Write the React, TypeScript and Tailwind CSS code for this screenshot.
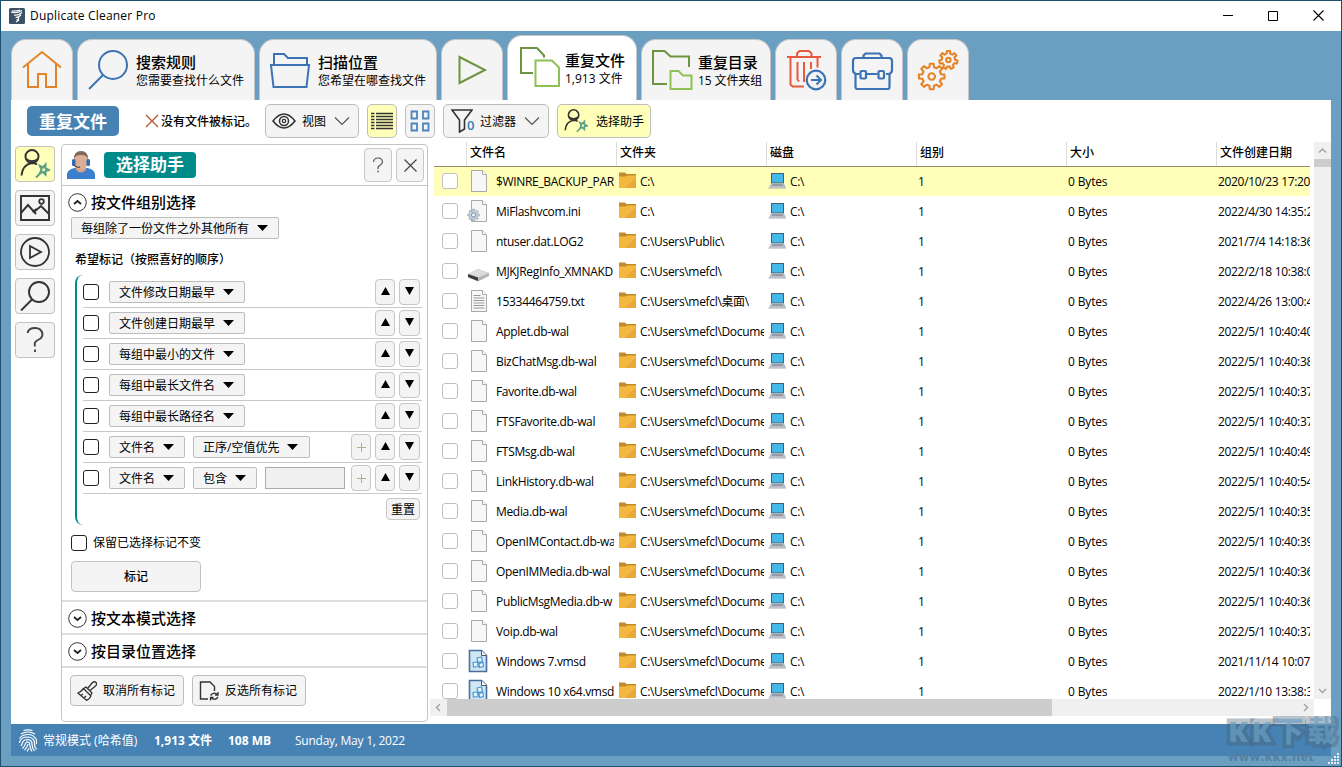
import type { ReactNode } from "react";

type IconProps = { box: string; w: number; h: number; children: ReactNode; className?: string };

function Icon({ box, w, h, children, className }: IconProps) {
  return (
    <svg viewBox={box} width={w} height={h} fill="none" className={`shrink-0 ${className ?? ""}`}>
      {children}
    </svg>
  );
}

function gearPath(cx: number, cy: number, outer: number, inner: number, teeth: number) {
  const pts: string[] = [];
  for (let i = 0; i < teeth; i++) {
    const a = (i / teeth) * Math.PI * 2 - Math.PI / 2;
    const s = Math.PI / teeth;
    [
      [inner, -s * 0.6],
      [outer, -s * 0.38],
      [outer, s * 0.38],
      [inner, s * 0.6],
    ].forEach(([r, d]) => {
      pts.push(`${(cx + r * Math.cos(a + d)).toFixed(2)} ${(cy + r * Math.sin(a + d)).toFixed(2)}`);
    });
  }
  return `M${pts.join("L")}Z`;
}

function WizardIcon({ size }: { size: number }) {
  return (
    <Icon box="0 0 30 30" w={size} h={size}>
      <circle cx="12" cy="7.5" r="6.5" stroke="#333" strokeWidth="2" />
      <path d="M6 10q6 4.5 12 0M1.5 26.5q1-11 10.500-12.500q3 0 5 1.500" stroke="#333" strokeWidth="2" />
      <path
        d="M16 28.500l6-6M20 17l3 1.500 2.500-3v4l3.500 1.500-3.500 1v3.500l-2.500-2.500-3 1 1.500-3.500z"
        stroke="#5a9f88"
        strokeWidth="2"
      />
    </Icon>
  );
}

type TabProps = { width: string; title?: string; sub?: string; active?: boolean; textClass?: string; children: ReactNode };

function Tab({ width, title, sub, active, textClass, children }: TabProps) {
  return (
    <div
      className={`flex rounded-t-[15px] border border-b-0 border-[#c6c6c6] ${width} ${
        active ? "h-[65px] bg-white pt-[3px]" : "h-[61px] bg-[#f4f4f4]"
      }`}
    >
      {children}
      {title && (
        <div className={`whitespace-nowrap ${active ? "pt-3" : "pt-[13px]"} ${textClass ?? ""}`}>
          <div className="text-[15px] font-medium leading-[19px]">{title}</div>
          <div className="text-[12px] leading-[17px]">{sub}</div>
        </div>
      )}
    </div>
  );
}

function Tabs() {
  return (
    <nav className="flex h-[69px] items-end gap-1 pl-[10px]">
      <Tab width="w-[62px]">
        <Icon box="12 40 60 60" w={60} h={60}>
          <path d="M23 67.500L42 52l19 15.500M28 64v23h10V74h8v13h10V64" stroke="#e58427" strokeWidth="2" />
        </Icon>
      </Tab>
      <Tab width="w-[178px]" title="搜索规则" sub="您需要查找什么文件">
        <Icon box="78 40 58 60" w={58} h={60}>
          <circle cx="113" cy="65" r="14" stroke="#3b73b5" strokeWidth="2" />
          <path d="M103 75L89 89" stroke="#3b73b5" strokeWidth="2" />
        </Icon>
      </Tab>
      <Tab width="w-[178px]" title="扫描位置" sub="您希望在哪查找文件">
        <Icon box="260 40 58 60" w={58} h={60}>
          <path d="M274 64V54h10l4 4h19v6M271 65h38l-2.500 22h-33z" stroke="#3b73b5" strokeWidth="2" />
        </Icon>
      </Tab>
      <Tab width="w-[62px]">
        <Icon box="442 40 60 60" w={60} h={60}>
          <path d="M459.500 57v26L485 70z" stroke="#6d9440" strokeWidth="2" />
        </Icon>
      </Tab>
      <Tab width="w-[130px]" title="重复文件" sub="1,913 文件" active>
        <Icon box="508 40 57 60" w={57} h={60}>
          <path d="M533 74H521V49h16l7 7.500v2" stroke="#6d9440" strokeWidth="2" />
          <path d="M535.500 61.500H552l7 7v18.500h-23.500z" stroke="#8dc153" strokeWidth="2" />
        </Icon>
      </Tab>
      <Tab width="w-[130px]" title="重复目录" sub="15 文件夹组" textClass="-ml-px tracking-[-0.1px]">
        <Icon box="642 40 57 60" w={57} h={60}>
          <path d="M667 84h-14V51h11.500l6 5.500H689V67" stroke="#6d9440" strokeWidth="2" />
          <path d="M670.500 71h8l4.500 4.500h8.500V89h-21z" stroke="#8dc153" strokeWidth="2" />
        </Icon>
      </Tab>
      <Tab width="w-[62px]">
        <Icon box="776 40 60 60" w={60} h={60}>
          <path
            d="M787 57h34M797 57v-3.500l2.500-2.500h9.500l2.500 2.500V57M790.500 58v26.500l2 2H804M817.500 58v9.500M797.500 62v17.500l1.500 2M804 62v20M811 62v7"
            stroke="#e8593d"
            strokeWidth="2"
          />
          <circle cx="816" cy="80" r="9.300" stroke="#3b73b5" strokeWidth="2.200" />
          <path d="M811 80h10M816.500 75.500l4.500 4.500-4.500 4.500" stroke="#3b73b5" strokeWidth="2" />
        </Icon>
      </Tab>
      <Tab width="w-[62px]">
        <Icon box="842 40 60 60" w={60} h={60}>
          <g stroke="#3b73b5" strokeWidth="2.200">
            <path d="M863.500 58v-2.500l2-2h14l2 2V58M859.500 74h-3.500q-3-1-3-4v-9q0-3 3-3h33q3 0 3 3v9q0 3-3 4h-3M855.500 74v13q0 2 2 2h30q2 0 2-2V74M867 74h10.500" />
            <rect x="860.500" y="71" width="5.500" height="7.500" rx="1" />
            <rect x="878.500" y="71" width="5.500" height="7.500" rx="1" />
          </g>
        </Icon>
      </Tab>
      <Tab width="w-[62px]">
        <Icon box="908 40 60 60" w={60} h={60}>
          <g stroke="#e58427" strokeWidth="2.100" strokeLinejoin="round">
            <path d={gearPath(931.7, 76.5, 12.9, 9.6, 8)} />
            <circle cx="931.700" cy="76.500" r="3.300" />
            <path d={gearPath(948.4, 60, 9.2, 6.7, 7)} />
            <circle cx="948.400" cy="60" r="2.200" />
          </g>
        </Icon>
      </Tab>
    </nav>
  );
}

const toolBtn = "flex h-[34px] items-center rounded-[5px] border border-[#bdbdbd]";

function Toolbar() {
  return (
    <div className="flex h-[42px] items-center text-[12px] leading-[18px]">
      <div className="ml-4 flex h-[30px] w-[92px] items-center justify-center rounded-[5px] bg-[#4682b4] pt-px text-[17px] font-bold text-white">
        重复文件
      </div>
      <Icon box="0 0 14 14" w={14} h={14} className="ml-[26px]">
        <path d="M1 1l12 12M13 1L1 13" stroke="#b5562e" strokeWidth="1.300" />
      </Icon>
      <span className="ml-[2px] w-[104px] whitespace-nowrap pt-[2px] font-medium">没有文件被标记。</span>
      <div className={`${toolBtn} w-[94px] bg-[#f4f4f4] pl-[6px]`}>
        <Icon box="0 0 24 16" w={24} h={16}>
          <path d="M1 8q11-14 22 0-11 14-22 0z" stroke="#333" strokeWidth="1.600" />
          <circle cx="12" cy="8" r="4.500" stroke="#333" strokeWidth="1.500" />
          <circle cx="12" cy="8" r="1.700" stroke="#333" strokeWidth="1.200" />
        </Icon>
        <span className="ml-[6px] pt-[2px]">视图</span>
        <Icon box="0 0 16 10" w={16} h={10} className="ml-2">
          <path d="M1 1.500l7 7 7-7" stroke="#555" strokeWidth="1.200" />
        </Icon>
      </div>
      <div className={`${toolBtn} ml-2 w-[30px] justify-center bg-[#ffffb9]`}>
        <Icon box="0 0 22 19" w={22} h={19}>
          <path
            d="M0 1.500h3.500M5 1.500h17M0 4.500h3.500M5 4.500h17M0 7.500h3.500M5 7.500h17M0 10.500h3.500M5 10.500h17M0 13.500h3.500M5 13.500h17M0 16.500h3.500M5 16.500h17"
            stroke="#333"
            strokeWidth="1.300"
          />
        </Icon>
      </div>
      <div className={`${toolBtn} ml-2 w-[30px] justify-center bg-[#f4f4f4]`}>
        <Icon box="0 0 20 22" w={20} h={22}>
          <path d="M1.500 1.500H7v7H1.500zM13 1.500h5.500v7H13zM1.500 13.500H7v7H1.500zM13 13.500h5.500v7H13z" stroke="#4a86bd" strokeWidth="1.800" />
        </Icon>
      </div>
      <div className={`${toolBtn} ml-2 w-[106px] bg-[#f4f4f4] pl-[7px]`}>
        <span className="relative flex w-[29px]">
          <Icon box="0 0 22 24" w={22} h={24}>
            <path d="M1 1h20L13.500 11v9L8.500 23V11z" stroke="#333" strokeWidth="1.600" />
          </Icon>
          <span className="absolute left-[16px] top-[8px] text-[13px] font-semibold leading-4 text-[#2d80b5]">0</span>
        </span>
        <span className="pt-[2px]">过滤器</span>
        <Icon box="0 0 16 10" w={16} h={10} className="ml-2">
          <path d="M1 1.500l7 7 7-7" stroke="#555" strokeWidth="1.200" />
        </Icon>
      </div>
      <div className={`${toolBtn} ml-2 w-[94px] bg-[#ffffb9] pl-[6px]`}>
        <WizardIcon size={24} />
        <span className="ml-2 pt-[2px]">选择助手</span>
      </div>
    </div>
  );
}

function Rail() {
  const btn = "flex h-9 w-10 items-center justify-center rounded-[4px] border border-[#c2c2c2]";
  return (
    <div className="ml-1 mt-1 flex w-[46px] shrink-0 flex-col gap-2">
      <div className={`${btn} bg-[#ffffb9]`}>
        <WizardIcon size={30} />
      </div>
      <div className={`${btn} bg-[#f4f4f4]`}>
        <Icon box="0 0 30 26" w={30} h={26}>
          <path d="M1 1h28v24H1zM1 18l7-8 8 9M12.500 17l4-3M14 17l7-6 8 8" stroke="#333" strokeWidth="1.900" />
          <circle cx="21.500" cy="6.500" r="2.300" stroke="#333" strokeWidth="1.700" />
        </Icon>
      </div>
      <div className={`${btn} bg-[#f4f4f4]`}>
        <Icon box="0 0 30 30" w={30} h={30}>
          <circle cx="15" cy="15" r="14" stroke="#333" strokeWidth="1.800" />
          <path d="M10 9v12l11-6z" stroke="#333" strokeWidth="1.800" />
        </Icon>
      </div>
      <div className={`${btn} bg-[#f4f4f4]`}>
        <Icon box="0 0 30 30" w={30} h={30}>
          <circle cx="19" cy="11" r="10" stroke="#333" strokeWidth="1.900" />
          <path d="M12 18.500L1 29.500" stroke="#333" strokeWidth="1.900" />
        </Icon>
      </div>
      <div className={`${btn} bg-[#f4f4f4]`}>
        <Icon box="0 0 30 30" w={30} h={30}>
          <path d="M7.500 8q1-5 7.500-5t7.500 6q0 4-4.500 6t-3 6.500M15 24.500V27" stroke="#444" strokeWidth="1.900" />
        </Icon>
      </div>
    </div>
  );
}

function Caret() {
  return (
    <svg width="11" height="6" viewBox="0 0 11 6" className="mb-px shrink-0">
      <path d="M0 0h11L5.500 6z" fill="#000" />
    </svg>
  );
}

function Combo({ label, width }: { label: string; width: string }) {
  return (
    <div
      className={`flex h-[22px] items-center gap-2 whitespace-nowrap rounded-[2px] border border-[#bdbdbd] bg-[#f4f4f4] pl-[9px] ${width}`}
    >
      <span className="pt-px">{label}</span>
      <Caret />
    </div>
  );
}

function Box({ dark }: { dark?: boolean }) {
  return (
    <span
      className={`h-4 w-4 shrink-0 rounded-[3px] border bg-white ${dark ? "border-[#222]" : "border-[#c0c0c0]"}`}
    />
  );
}

const sqBtn = "flex h-[26px] shrink-0 items-center justify-center rounded-[4px] border border-[#c6c6c6] bg-[#f4f4f4]";

function Criteria({ children, plus }: { children: ReactNode; plus?: boolean }) {
  return (
    <div className="flex h-[31px] items-center border-b border-[#c8c8c8]">
      <Box dark />
      <div className="ml-[10px] flex flex-1 gap-2">{children}</div>
      {plus && (
        <span className={`${sqBtn} mr-1 w-5`}>
          <svg width="9" height="9" viewBox="0 0 9 9">
            <path d="M4.500 0v9M0 4.500h9" stroke="#a8b490" />
          </svg>
        </span>
      )}
      <span className={`${sqBtn} mr-1 w-5 pb-[2px]`}>
        <svg width="9" height="8" viewBox="0 0 9 8">
          <path d="M4.500 0L9 8H0z" />
        </svg>
      </span>
      <span className={`${sqBtn} mr-[2px] w-[21px] pb-[3px]`}>
        <svg width="9" height="8" viewBox="0 0 9 8">
          <path d="M0 0h9L4.500 8z" />
        </svg>
      </span>
    </div>
  );
}

function SectionTitle({ title, open }: { title: string; open?: boolean }) {
  return (
    <div className="flex h-8 items-center gap-1 pl-[6px] text-[15px] font-medium">
      <Icon box="0 0 19 19" w={19} h={19}>
        <circle cx="9.500" cy="9.500" r="8.800" stroke="#333" />
        <path d={open ? "M6 11l3.500-3 3.500 3" : "M6 8l3.500 3L13 8"} stroke="#222" strokeWidth="1.800" />
      </Icon>
      <span>{title}</span>
    </div>
  );
}

const simpleRules = ["文件修改日期最早", "文件创建日期最早", "每组中最小的文件", "每组中最长文件名", "每组中最长路径名"];

function AssistantPanel() {
  return (
    <section className="mt-[2px] flex h-[578px] w-[367px] shrink-0 flex-col rounded-[4px] border border-[#c4c4c4] text-[12px] leading-[18px]">
      <header className="flex h-[41px] shrink-0 items-center border-b border-[#c4c4c4] pl-[5px] pr-[3px]">
        <Icon box="0 0 28 28" w={28} h={28}>
          <path d="M0 28v-5q1-5 8-6h12q7 1 8 6v5z" fill="#3b7fce" />
          <path d="M9 14h10v5q-5 5-10 0z" fill="#d3a085" />
          <path d="M7 7q0-6 7-6.500 7 .5 7 6.500v4q-1 7-7 8-6-1-7-8z" fill="#dcae96" />
          <path d="M7 8q0-8 7-8t7 8q-1-4-7-4T7 8z" fill="#856a5c" />
          <rect x="5" y="8" width="3.500" height="7" rx="1.500" fill="#2f6cb3" />
          <rect x="19.500" y="8" width="3.500" height="7" rx="1.500" fill="#2f6cb3" />
          <path d="M7 14q2 3 6 2" stroke="#3a3a4a" strokeWidth="1.200" />
        </Icon>
        <div className="ml-[9px] flex h-[26px] w-[92px] items-center justify-center rounded-[4px] bg-[#008b8b] text-[17px] font-bold text-white">
          选择助手
        </div>
        <span className="ml-auto flex h-[34px] w-7 items-center justify-center rounded-[4px] border border-[#c8c8c8] bg-[#f4f4f4]">
          <Icon box="0 0 12 16" w={12} h={16}>
            <path d="M1.500 5q.5-4 4.500-4t4.500 3.800q0 2.200-2.500 3.500T6 12M6 13.500V15.500" stroke="#555" strokeWidth="1.200" />
          </Icon>
        </span>
        <span className="ml-1 flex h-[34px] w-7 items-center justify-center rounded-[4px] border border-[#c8c8c8] bg-[#f4f4f4]">
          <Icon box="0 0 13 13" w={13} h={13}>
            <path d="M.5.5l12 12M12.500.5l-12 12" stroke="#444" strokeWidth="1.200" />
          </Icon>
        </span>
      </header>

      <div className="flex h-[416px] shrink-0 flex-col border-b-2 border-[#dedede]">
        <SectionTitle title="按文件组别选择" open />
        <div className="-mt-px pl-[9px]">
          <Combo label="每组除了一份文件之外其他所有" width="w-[208px]" />
        </div>
        <div className="mt-3 pl-[13px] font-medium">希望标记（按照喜好的顺序）</div>
        <div className="ml-[13px] mr-[5px] mt-[6px] flex h-[250px]">
          <span className="h-full w-2 shrink-0 rounded-l-[8px] border-l-2 border-[#008b8b]" />
          <div className="flex-1 pt-[2px]">
            {simpleRules.map((rule) => (
              <Criteria key={rule}>
                <Combo label={rule} width="w-[136px]" />
              </Criteria>
            ))}
            <Criteria plus>
              <Combo label="文件名" width="w-[76px]" />
              <Combo label="正序/空值优先" width="w-[117px]" />
            </Criteria>
            <Criteria plus>
              <Combo label="文件名" width="w-[76px]" />
              <Combo label="包含" width="w-16" />
              <span className="h-[22px] w-20 border border-[#ababab] bg-[#f0f0f0]" />
            </Criteria>
            <div className="mr-[2px] mt-1 flex justify-end">
              <span className="flex h-[22px] w-[34px] items-center justify-center rounded-[4px] border border-[#c6c6c6] bg-[#f4f4f4] pt-px">
                重置
              </span>
            </div>
          </div>
        </div>
        <div className="mt-2 flex items-center gap-[6px] pl-[9px]">
          <Box dark />
          <span className="pt-px">保留已选择标记不变</span>
        </div>
        <div className="ml-[9px] mt-[9px] flex h-[31px] w-[130px] items-center justify-center rounded-[4px] border border-[#c2c2c2] bg-[#f4f4f4] pt-px font-medium">
          标记
        </div>
      </div>
      <div className="h-[33px] shrink-0 border-b-2 border-[#dedede]">
        <SectionTitle title="按文本模式选择" />
      </div>
      <div className="h-[33px] shrink-0 border-b-2 border-[#dedede]">
        <SectionTitle title="按目录位置选择" />
      </div>
      <div className="flex gap-2 pl-2 pt-[7px]">
        <div className="flex h-[31px] w-[114px] items-center gap-[6px] rounded-[4px] border border-[#bdbdbd] bg-[#f4f4f4] pl-[6px]">
          <Icon box="0 0 20 20" w={20} h={20}>
            <path
              d="M11 7l4.500-5.500q2-1.500 3.500 0t-.5 3.500L13 9.500M9 6l6 6-1.500 2.500L6.500 7.500zM6.500 7.500Q4 11 .8 12l8.700 7.300q4-2 4.500-4.800M4 14.500l2-1.500M7 17l2-2"
              stroke="#333"
              strokeWidth="1.300"
              strokeLinejoin="round"
            />
          </Icon>
          <span className="whitespace-nowrap pt-px">取消所有标记</span>
        </div>
        <div className="flex h-[31px] w-[114px] items-center gap-[6px] rounded-[4px] border border-[#bdbdbd] bg-[#f4f4f4] pl-[6px]">
          <Icon box="0 0 20 20" w={20} h={20}>
            <path d="M9 18H1.500V1H11l4.500 4.500V10" stroke="#333" strokeWidth="1.400" />
            <path d="M11.500 14.500q3-4 7-1M19 11v3h-3M19 16q-3 4-7 1M11.500 19.500v-3h3" stroke="#333" strokeWidth="1.300" />
          </Icon>
          <span className="whitespace-nowrap pt-px">反选所有标记</span>
        </div>
      </div>
    </section>
  );
}

type FileKind = "blank" | "ini" | "drive" | "text" | "vm";
type Row = { name: string; dir: string; date: string; kind: FileKind };

const docs = "C:\\Users\\mefcl\\Docume";

const rows: Row[] = [
  { name: "$WINRE_BACKUP_PART", dir: "C:\\", date: "2020/10/23 17:20", kind: "blank" },
  { name: "MiFlashvcom.ini", dir: "C:\\", date: "2022/4/30 14:35:2", kind: "ini" },
  { name: "ntuser.dat.LOG2", dir: "C:\\Users\\Public\\", date: "2021/7/4 14:18:36", kind: "blank" },
  { name: "MJKJRegInfo_XMNAKD", dir: "C:\\Users\\mefcl\\", date: "2022/2/18 10:38:0", kind: "drive" },
  { name: "15334464759.txt", dir: "C:\\Users\\mefcl\\桌面\\", date: "2022/4/26 13:00:4", kind: "text" },
  { name: "Applet.db-wal", dir: docs, date: "2022/5/1 10:40:40", kind: "blank" },
  { name: "BizChatMsg.db-wal", dir: docs, date: "2022/5/1 10:40:38", kind: "blank" },
  { name: "Favorite.db-wal", dir: docs, date: "2022/5/1 10:40:37", kind: "blank" },
  { name: "FTSFavorite.db-wal", dir: docs, date: "2022/5/1 10:40:37", kind: "blank" },
  { name: "FTSMsg.db-wal", dir: docs, date: "2022/5/1 10:40:49", kind: "blank" },
  { name: "LinkHistory.db-wal", dir: docs, date: "2022/5/1 10:40:54", kind: "blank" },
  { name: "Media.db-wal", dir: docs, date: "2022/5/1 10:40:35", kind: "blank" },
  { name: "OpenIMContact.db-wa", dir: docs, date: "2022/5/1 10:40:39", kind: "blank" },
  { name: "OpenIMMedia.db-wal", dir: docs, date: "2022/5/1 10:40:36", kind: "blank" },
  { name: "PublicMsgMedia.db-w", dir: docs, date: "2022/5/1 10:40:36", kind: "blank" },
  { name: "Voip.db-wal", dir: docs, date: "2022/5/1 10:40:37", kind: "blank" },
  { name: "Windows 7.vmsd", dir: docs, date: "2021/11/14 10:07", kind: "vm" },
  { name: "Windows 10 x64.vmsd", dir: docs, date: "2022/1/10 13:38:3", kind: "vm" },
];

function FileIcon({ kind }: { kind: FileKind }) {
  if (kind === "drive") {
    return (
      <Icon box="0 0 24 24" w={24} h={24}>
        <path d="M1 15l10-5 11 4v3l-11 5.500-10-4z" fill="#b5b5b5" />
        <path d="M1 15l10-5 11 4-11 4.500z" fill="#dcdcdc" />
        <path d="M1 15l10 3.500V22L1 18z" fill="#3c3f3c" />
      </Icon>
    );
  }
  if (kind === "vm") {
    return (
      <Icon box="0 0 24 24" w={24} h={24}>
        <path d="M2.500 1.500h12l5 5v16h-17z" fill="#cfe6f5" stroke="#4a6f9f" strokeWidth="1.600" />
        <path d="M14.500 1.500v5h5" fill="#fff" stroke="#555" />
        <path d="M10 9l4.500-1 1 4.500-4.500 1zM6 13.500l4.500-.5.500 4.500-4.500.5zM12 14.500l4-1 .5 4-4 1z" fill="#e4f5ff" stroke="#4e9ad2" strokeWidth="1.200" />
      </Icon>
    );
  }
  return (
    <Icon box="0 0 24 24" w={24} h={24}>
      <path d="M4.500 1.500h11l4 4v17h-15z" fill="#f7f7f7" stroke="#a9a9a9" />
      <path d="M15.500 1.500v4h4" fill="#fff" stroke="#a9a9a9" />
      {kind === "text" && <path d="M6.500 6.500h7M6.500 9h11M6.500 11.500h11M6.500 14h11M6.500 16.500h11M6.500 19h11" stroke="#999" />}
      {kind === "ini" && (
        <>
          <path d={gearPath(6.5, 16, 6, 4.5, 8)} fill="#c3ccd5" stroke="#94a0ab" strokeWidth=".6" />
          <circle cx="6.500" cy="16" r="2" fill="#fff" stroke="#6d8fb0" />
        </>
      )}
    </Icon>
  );
}

function FolderIcon() {
  return (
    <Icon box="0 0 17 17" w={17} h={17} className="-mt-px">
      <path d="M0 .5h6L7.500 2H17v4H0z" fill="#c18a2c" />
      <path d="M0 4.500h6.500L8 3.500h9v12.500H0z" fill="#f4b73f" />
      <path d="M17 5v11H6z" fill="#e9a93a" />
    </Icon>
  );
}

function DiskIcon() {
  return (
    <Icon box="0 0 19 18" w={19} h={18}>
      <path d="M3 1h13v10.500H3z" fill="#48606e" />
      <path d="M4 2h11v8.500H4z" fill="#45b8ea" />
      <path d="M3 11.500h13l2 4H1z" fill="#b9bec6" />
      <path d="M4.500 12.300h10l.8 1.500H4z" fill="#8a909a" />
      <path d="M.5 15.500h17.500v1H.5z" fill="#a3a8b1" />
    </Icon>
  );
}

const columns = ["", "文件名", "文件夹", "磁盘", "组别", "大小", "文件创建日期"];
const gridCols = "grid grid-cols-[33px_150px_150px_150px_150px_150px_93px]";

function ResultsTable() {
  return (
    <section className="flex h-[574px] flex-1 flex-col">
      <div className="flex h-[557px]">
        <div className="ml-[6px] mr-1 w-[876px] overflow-hidden">
          <div className={`${gridCols} h-[25px] border-b border-[#8f8f6a]`}>
            {columns.map((c, i) => (
              <div
                key={i}
                className={`flex items-center whitespace-nowrap pb-[2px] pl-[3px] text-[12px] font-medium ${
                  i < 6 ? "border-r border-[#dcdcdc]" : ""
                }`}
              >
                {c}
              </div>
            ))}
          </div>
          {rows.map((r, i) => (
            <div
              key={r.name}
              className={`${gridCols} h-[30px] items-center border-b border-white pb-px text-[12px] tracking-[-0.33px] ${
                i === 0 ? "bg-[#ffffb9]" : ""
              }`}
            >
              <span className="flex pl-2">
                <Box />
              </span>
              <span className="mr-[3px] flex items-center gap-[5px] overflow-hidden whitespace-nowrap">
                <FileIcon kind={r.kind} />
                <span className="pt-[2px]">{r.name}</span>
              </span>
              <span className="mr-[3px] flex items-center gap-1 overflow-hidden whitespace-nowrap pl-[2px]">
                <FolderIcon />
                <span className="pt-[2px]">{r.dir}</span>
              </span>
              <span className="flex items-center gap-[3px] pl-px">
                <DiskIcon />
                <span className="pt-[2px]">C:\</span>
              </span>
              <span className="pl-px pt-[2px]">1</span>
              <span className="pl-px pt-[2px] tracking-[-0.15px]">0 Bytes</span>
              <span className="overflow-hidden whitespace-nowrap pl-px pt-[2px]">{r.date}</span>
            </div>
          ))}
        </div>
        <div className="flex w-[17px] flex-col items-center bg-[#f0f0f0]">
          <Icon box="0 0 17 17" w={17} h={17}>
            <path d="M5 10.500l3.500-3.500 3.500 3.500" stroke="#a0a0a0" strokeWidth="1.300" />
          </Icon>
          <span className="h-2 w-full bg-[#cdcdcd]" />
          <Icon box="0 0 17 17" w={17} h={17} className="mt-auto">
            <path d="M5 7l3.500 3.500L12 7" stroke="#a0a0a0" strokeWidth="1.300" />
          </Icon>
        </div>
      </div>
      <div className="ml-[2px] flex h-[17px] w-[884px] bg-[#f0f0f0]">
        <Icon box="0 0 17 17" w={17} h={17}>
          <path d="M10 5L6.500 8.500 10 12" stroke="#a0a0a0" strokeWidth="1.300" />
        </Icon>
        <span className="w-[605px] bg-[#cdcdcd]" />
        <Icon box="0 0 17 17" w={17} h={17} className="ml-auto">
          <path d="M7 5l3.500 3.500L7 12" stroke="#a0a0a0" strokeWidth="1.300" />
        </Icon>
      </div>
    </section>
  );
}

function StatusBar() {
  return (
    <footer className="mx-[10px] flex h-8 items-center bg-[#4682b4] pl-2 text-[12px] leading-[18px] text-white">
      <Icon box="0 0 18 23" w={18} h={23}>
        <g stroke="#fff" strokeWidth="1.200">
          <path d="M4.500 1.500Q9 .3 13.500 1.500M2 5q7-4 14 0M.5 9.500Q3 5.500 9 5.500t8.500 5.500v4" />
          <path d="M.5 14q.5-6 8.500-6 6.500.5 6.500 6.500 0 4 2 6" />
          <path d="M2 17q1.500-2 1.500-3.500 1-3 5.500-3 4 .5 4 4.500 0 4.500 2.500 7" />
          <path d="M3.500 19.500Q6 17 6.500 14.500q1-1.800 2.500-1.500 2 .5 1.800 3 .3 4 2.200 6.500M5.500 21q3-2.500 3.500-6M8 22.500l2-3" />
        </g>
      </Icon>
      <span className="ml-[6px] w-[111px] whitespace-nowrap pt-[2px]">常规模式 (哈希值)</span>
      <span className="w-[74px] pt-[2px] font-bold">1,913 文件</span>
      <span className="w-[67px] pt-[2px] font-bold">108 MB</span>
      <span className="pt-[2px] tracking-[-0.25px]">Sunday, May 1, 2022</span>
    </footer>
  );
}

function Watermark() {
  return (
    <div className="absolute bottom-0 right-0 w-[117px] overflow-hidden whitespace-nowrap pl-1">
      <div className="h-8 text-[29px] font-black leading-[30px] tracking-[3.500px] text-[#6b9fc1]/70 [-webkit-text-stroke:7px_rgba(75,95,115,0.4)] [paint-order:stroke]">
        KK下载
      </div>
      <div className="h-[18px] text-[12px] font-bold leading-[18px] tracking-[0.600px] text-[#557f9f]">www.kkx.net</div>
    </div>
  );
}

export default function App() {
  return (
    <div className="relative h-[767px] w-[1342px] overflow-hidden border border-[#1d4f6e] bg-[#6b9fc1] font-['Open_Sans','Noto_Sans_CJK_SC',sans-serif] text-black">
      <header className="flex h-[30px] items-center bg-white pl-2">
        <Icon box="0 0 16 16" w={16} h={16}>
          <rect width="16" height="16" rx="1.500" fill="#3b5265" />
          <path d="M2 4q5 2 11-1.500M3 3q4 .5 8-1M5 7q4 1 8-2.500M6.500 9.500q3 0 5.500-2.500M7.500 11.500q3 .5 2-2M7 14l3-2" stroke="#fff" strokeWidth="1.200" />
        </Icon>
        <span className="ml-[5px] text-[12px] leading-[18px] tracking-[0.200px]">Duplicate Cleaner Pro</span>
        <div className="ml-auto flex items-center gap-[35px] pr-[17px]">
          <svg width="10" height="10" viewBox="0 0 10 10">
            <path d="M0 4.500h10" stroke="#000" />
          </svg>
          <svg width="10" height="10" viewBox="0 0 10 10" fill="none" className="-mt-px">
            <path d="M.5.5h9v9h-9z" stroke="#000" />
          </svg>
          <svg width="11" height="11" viewBox="0 0 11 11" className="-mt-px">
            <path d="M.5.5l10 10M10.500.5l-10 10" stroke="#000" strokeWidth="1.100" />
          </svg>
        </div>
      </header>
      <Tabs />
      <main className="mx-[10px] h-[624px] bg-white">
        <Toolbar />
        <div className="flex">
          <Rail />
          <AssistantPanel />
          <ResultsTable />
        </div>
      </main>
      <StatusBar />
      <svg width="12" height="12" viewBox="0 0 12 12" className="absolute bottom-[1px] right-[1px]">
        <path d="M9 0h2v2H9zM9 3h2v2H9zM6 3h2v2H6zM9 6h2v2H9zM6 6h2v2H6zM3 6h2v2H3zM9 9h2v2H9zM6 9h2v2H6zM3 9h2v2H3zM0 9h2v2H0z" fill="#e6eef5" />
      </svg>
      <Watermark />
    </div>
  );
}
